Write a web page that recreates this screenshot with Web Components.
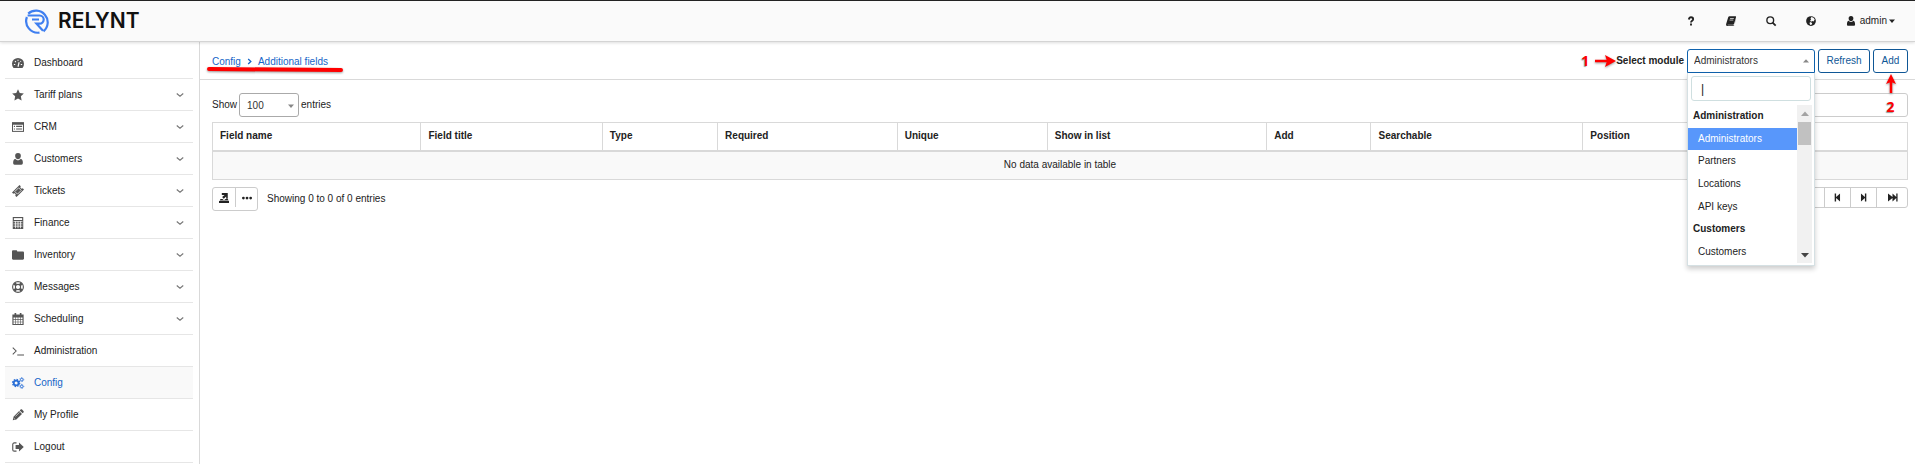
<!DOCTYPE html>
<html lang="en">
<head>
<meta charset="utf-8">
<title>Additional fields</title>
<style>
body { margin: 0; font: 10px/16px "Liberation Sans", Arial, sans-serif; color: #222; background: #fff; }
</style>
</head>
<body>
<app-shell>
  <top-bar slot="top"></top-bar>
  <side-nav slot="side"></side-nav>
  <page-header slot="main"></page-header>
  <fields-table slot="main"></fields-table>
</app-shell>
<script>
const ICONS = {
  dashboard: '<path d="M2 14.500a8 8 0 1 1 12 0z" fill="currentColor"/><path d="M8 13l1.500-6M2.500 10h1.800M11.700 10h1.800M4 5.500l1.200 1.200M8 3.500v1.500M12 5.500l-.8.8" stroke="#fff" stroke-width="1.500"/>',
  star: '<path fill="currentColor" d="M8 .3l2.300 5 5.500.7-4 3.800 1 5.500L8 12.600l-4.800 2.700 1-5.500-4-3.800 5.500-.7z"/>',
  crm: '<path fill="currentColor" d="M0 1.500h16v13H0z"/><path fill="#fff" d="M1.300 5h13.400v8.200H1.300z"/><path stroke="currentColor" stroke-width="1.500" d="M2.500 7.200H4M5.500 7.200h8M2.500 10.700H4M5.500 10.700h8"/>',
  user: '<path fill="currentColor" d="M8 0a3.800 3.800 0 0 1 3.800 4C11.800 6.500 10 8.300 8 8.300S4.200 6.500 4.200 4A3.800 3.800 0 0 1 8 0zM4.500 7.500C5.400 8.800 6.600 9.500 8 9.500s2.600-.7 3.500-2c2 .3 3 2.500 3 5.500 0 1.600-.8 2.500-2 2.500h-9c-1.200 0-2-.9-2-2.500 0-3 1-5.200 3-5.500z"/>',
  ticket: '<path fill="currentColor" d="M10 0l1.700 1.700a1.800 1.800 0 0 0 2.600 2.600L16 6 6 16l-1.700-1.700a1.800 1.800 0 0 0-2.600-2.600L0 10z"/><path fill="none" stroke="#fff" stroke-width="1" d="M8.800 3.700l3.500 3.500-5 5-3.500-3.500z"/>',
  calc: '<path fill="currentColor" d="M1 0h14v16H1z"/><path fill="#fff" d="M2.500 1.500h11v2.500h-11z"/><path stroke="#fff" stroke-width="1" d="M2 6.200h12M2 9.200h12M2 12.200h12M4.700 5.500v9.500M8 5.500v9.500M11.300 5.500v9.500"/>',
  folder: '<path fill="currentColor" d="M0 3.200C0 2.200.7 1.500 1.500 1.500h4C6.300 1.500 7 2.200 7 3.200h7.500c.8 0 1.500.7 1.500 1.500v8c0 .8-.7 1.500-1.500 1.500h-13C.7 14.200 0 13.500 0 12.700z"/>',
  life: '<circle cx="8" cy="8" r="7.200" fill="none" stroke="currentColor" stroke-width="1.500"/><circle cx="8" cy="8" r="3.500" fill="none" stroke="currentColor" stroke-width="1.400"/><path d="M3 3l2.700 2.700M13 3l-2.700 2.700M3 13l2.700-2.700M13 13l-2.700-2.700" stroke="currentColor" stroke-width="3.500"/>',
  calendar: '<path fill="currentColor" d="M.5 2h15v14H.5z"/><path fill="#fff" d="M2 6h2.500v2.300H2zM5.300 6h2.300v2.300H5.300zM8.400 6h2.300v2.300H8.400zM11.500 6H14v2.300h-2.500zM2 9.200h2.500v2.300H2zM5.300 9.200h2.300v2.300H5.300zM8.400 9.200h2.300v2.300H8.400zM11.500 9.200H14v2.300h-2.500zM2 12.400h2.500v2.200H2zM5.300 12.400h2.300v2.200H5.300zM8.400 12.400h2.300v2.200H8.400zM11.500 12.400H14v2.200h-2.500z"/><path stroke="currentColor" stroke-width="2.200" d="M4.500 0v4M11.500 0v4"/>',
  terminal: '<path fill="none" stroke="currentColor" stroke-width="1.400" d="M1 3.500l4.500 4.500L1 12.500M7 13.300h9"/>',
  cogs: '<circle cx="5.500" cy="8" r="3.200" fill="none" stroke="currentColor" stroke-width="2.400"/><circle cx="5.500" cy="8" r="4.800" fill="none" stroke="currentColor" stroke-width="1.600" stroke-dasharray="2 1.770"/><circle cx="13" cy="3.500" r="1.700" fill="none" stroke="currentColor" stroke-width="1.200"/><circle cx="13" cy="12.500" r="1.700" fill="none" stroke="currentColor" stroke-width="1.200"/><circle cx="13" cy="3.500" r="2.700" fill="none" stroke="currentColor" stroke-dasharray="1.100 1"/><circle cx="13" cy="12.500" r="2.700" fill="none" stroke="currentColor" stroke-dasharray="1.100 1"/>',
  pencil: '<path fill="currentColor" d="M1 15l1-4.800 7.500-7.500 3.800 3.800-7.500 7.500zM10.300 1.900l1.200-1.200c.6-.6 1.300-.6 1.900 0L15.300 2.600c.6.600.6 1.300 0 1.900l-1.200 1.200z"/><path stroke="#fff" stroke-width=".8" d="M4.500 10l5.500-5.500M2.200 12l1.800 1.800"/>',
  logout: '<path fill="none" stroke="currentColor" stroke-width="1.500" d="M6 2.500H3A2 2 0 0 0 1 4.500v7a2 2 0 0 0 2 2h3"/><path fill="currentColor" d="M4.800 5.300h4.500V2L15.700 8l-6.400 6v-3.300H4.800z"/>',
  chevron: '<path fill="none" stroke="currentColor" stroke-width="2.200" d="M1.500 5L8 10.500 14.500 5"/>',
  angle: '<path fill="none" stroke="currentColor" stroke-width="3" d="M5 2.500L11 8l-6 5.500"/>',
  help: '<path fill="none" stroke="currentColor" stroke-width="3" d="M4.500 5.500C5 3.300 6.300 2 8 2c2 0 3.400 1.300 3.400 3.100C11.400 7.800 8 7.500 8 10.500"/><path fill="currentColor" d="M6.500 12h3v3h-3z"/>',
  book: '<path fill="currentColor" d="M5.500.5H15c.9 0 1.300.7 1 1.600l-3 10.300c-.3.900-1 1.400-1.800 1.400H3c-.5 0-.6.900 0 .9h9.500c.5 0 .8-.4 1-.8L16 5v1.500l-2.700 8c-.3.900-1 1.500-1.800 1.500H2.500C.8 16-.3 14.300.2 12.700L3.500 2C3.800 1.100 4.700.5 5.500.5z"/><path stroke="#fff" stroke-width="1.100" d="M6.500 4h6M5.700 6.500h6"/>',
  search: '<circle cx="6.800" cy="6.800" r="5.400" fill="none" stroke="currentColor" stroke-width="2.200"/><path stroke="currentColor" stroke-width="2.800" d="M10.500 10.500l5 5"/>',
  globe: '<circle cx="8" cy="8" r="7.800" fill="currentColor"/><path fill="#fafafa" d="M8.500 1.500l3.500 1.200 2 3-2 3-2-.9-1.700 1.200-1.900-1.600 1.700-1.300-.9-1.800zM6.500 9.500l3.500 1.500-1.200 3-1.800.5-1.400-3z"/>',
  caret: '<path fill="currentColor" d="M0 4h16L8 13z"/>',
  export: '<path fill="currentColor" d="M4.500 0H14v9.200h-2.500V5.500L7.500 9 5 6.500 9 3H4.500zM2.500 9.500h3L8 11.500l2.500-2H14L15.500 12H1zM0 12.800h16V16H0z"/>',
  dots: '<circle cx="2.200" cy="8" r="2.200" fill="currentColor"/><circle cx="8" cy="8" r="2.200" fill="currentColor"/><circle cx="13.800" cy="8" r="2.200" fill="currentColor"/>',
  fastback: '<path fill="currentColor" d="M0 2h2v5.500L8 2v5.500L14 2v12L8 8.500V14L2 8.500V14H0z"/>',
  stepback: '<path fill="currentColor" d="M3 1h2.500v6L12.500 1v14L5.500 9v6H3z"/>',
  stepfwd: '<path fill="currentColor" d="M13 1h-2.500v6L3.500 1v14l7-6v6H13z"/>',
  fastfwd: '<path fill="currentColor" d="M17 1h-2.300v6L8 1v6L0 1v14l8-6v6l6.700-6v6H17z"/>'
};
const define = (name, html) => {
  const t = document.createElement('template');
  t.innerHTML = html;
  customElements.define(name, class extends HTMLElement {
    constructor() { super(); this.attachShadow({ mode: 'open' }).append(t.content.cloneNode(true)); }
  });
};

customElements.define('ui-icon', class extends HTMLElement {
  connectedCallback() {
    if (this.shadowRoot) return;
    this.attachShadow({ mode: 'open' }).innerHTML =
      `<style>:host{display:inline-block;width:12px;height:12px;flex:none}svg{display:block;width:100%;height:100%;overflow:visible}</style>
       <svg viewBox="0 0 16 16" aria-hidden="true">${ICONS[this.getAttribute('name')]}</svg>`;
  }
});

define('app-shell', `<style>
  :host { display: grid; grid-template: auto 1fr / 200px 1fr; min-height: 100vh; }
  header { grid-column: 1 / -1; position: relative; z-index: 1; }
  aside { border-right: 1px solid #d9d9d9; }
  main { min-width: 0; }
</style>
<header><slot name="top"></slot></header>
<aside><slot name="side"></slot></aside>
<main><slot name="main"></slot></main>`);

define('brand-logo', `<style>
  :host { display: block; }
  a { display: flex; align-items: center; gap: 7px; color: #111; text-decoration: none; font: 600 21px/24px Inter, sans-serif; }
  svg { width: 26px; height: 26px; }
</style>
<a href="#"><svg viewBox="0 0 26 26" aria-hidden="true" fill="none" stroke="#3f7ff0" stroke-width="2.200">
  <path d="M3.200 5.600A11.700 11.700 0 1 1 18.500 23.300M1.900 9A11.700 11.700 0 0 0 14.500 24.600"/>
  <path d="M2.600 7.500h12a4.100 4.100 0 0 1 0 8.200H11.500l6.500 7M7 11.500h7"/></svg><span>RELYNT</span></a>`);

define('top-bar', `<style>
  :host { display: flex; align-items: center; justify-content: space-between; height: 40px; padding: 0 20px 0 25px;
    background: #fafafa; border-top: 1px solid #222; border-bottom: 1px solid #d4d4d4; box-shadow: 0 1px 3px #0002; }
  nav { display: flex; align-items: center; gap: 30px; }
  button { display: flex; align-items: center; gap: 4px; border: 0; padding: 0; background: none; font: inherit; color: #222; }
  ui-icon { width: 10px; height: 10px; }
  .caret { width: 6px; height: 6px; margin-left: -2px; }
</style>
<brand-logo></brand-logo>
<nav>
  <button aria-label="Help"><ui-icon name="help"></ui-icon></button>
  <button aria-label="Documentation"><ui-icon name="book"></ui-icon></button>
  <button aria-label="Search"><ui-icon name="search"></ui-icon></button>
  <button aria-label="Language"><ui-icon name="globe"></ui-icon></button>
  <button><ui-icon name="user"></ui-icon>admin<ui-icon class="caret" name="caret"></ui-icon></button>
</nav>`);

customElements.define('nav-item', class extends HTMLElement {
  connectedCallback() {
    if (this.shadowRoot) return;
    this.attachShadow({ mode: 'open' }).innerHTML = `<style>
      :host { display: block; border-bottom: 1px solid #e6e6e6; color: #222; --icon: #555; }
      :host([active]) { background: #f9f9f9; color: #1565c8; --icon: #2a6fd6; }
      a { display: flex; align-items: center; height: 31px; padding: 0 9px 0 7px; color: inherit; text-decoration: none; }
      ui-icon { color: var(--icon); width: 12px; height: 12px; margin-right: 10px; }
      .more { margin: 0 0 0 auto; width: 8px; height: 8px; color: #777; }
    </style><a href="#"><ui-icon name="${this.getAttribute('icon')}"></ui-icon><slot></slot>${this.hasAttribute('more') ? '<ui-icon class="more" name="chevron"></ui-icon>' : ''}</a>`;
  }
});

define('side-nav', `<style>
  :host { display: block; padding: 5px 6px 0 5px; }
</style>
<nav>
  <nav-item icon="dashboard">Dashboard</nav-item>
  <nav-item icon="star" more>Tariff plans</nav-item>
  <nav-item icon="crm" more>CRM</nav-item>
  <nav-item icon="user" more>Customers</nav-item>
  <nav-item icon="ticket" more>Tickets</nav-item>
  <nav-item icon="calc" more>Finance</nav-item>
  <nav-item icon="folder" more>Inventory</nav-item>
  <nav-item icon="life" more>Messages</nav-item>
  <nav-item icon="calendar" more>Scheduling</nav-item>
  <nav-item icon="terminal">Administration</nav-item>
  <nav-item icon="cogs" active>Config</nav-item>
  <nav-item icon="pencil">My Profile</nav-item>
  <nav-item icon="logout">Logout</nav-item>
</nav>`);

define('module-menu', `<style>
  :host { display: block; box-sizing: border-box; background: #fff; border: 1px solid #d5e0e3; border-top: 0; box-shadow: 0 3px 5px #0003; padding: 3px 2px 2px 0; }
  input { display: block; box-sizing: border-box; width: calc(100% - 4px); height: 25px; margin: 0 1px 4px 3px; padding: 0 9px; border: 1px solid #cfdfe0; border-radius: 3px; font: 12px/16px "Liberation Sans", sans-serif; color: #222; outline: 0; }
  .scroll { display: grid; grid-template-columns: 1fr 15px; height: 158px; }
  .list { display: grid; grid-auto-rows: 1fr; }
  .list > * { display: flex; align-items: center; padding-left: 10px; }
  .list > strong { padding-left: 5px; }
  [aria-selected] { background: #5897fb; color: #fff; }
  .bar { display: flex; flex-direction: column; align-items: center; background: #f1f1f1; padding: 5px 0 4px; }
  .bar i { width: 13px; height: 23px; background: #c1c1c1; margin: 4px 0 auto; }
  .bar ui-icon { width: 8px; height: 8px; color: #444; }
  .bar .up { transform: rotate(180deg); color: #a3a3a3; }
</style>
<input type="text" value="|" aria-label="Search modules">
<div class="scroll">
  <div class="list" role="listbox">
    <strong>Administration</strong>
    <span role="option" aria-selected="true">Administrators</span>
    <span role="option">Partners</span>
    <span role="option">Locations</span>
    <span role="option">API keys</span>
    <strong>Customers</strong>
    <span role="option">Customers</span>
  </div>
  <div class="bar"><ui-icon class="up" name="caret"></ui-icon><i></i><ui-icon name="caret"></ui-icon></div>
</div>`);

define('page-header', `<style>
  :host { display: flex; justify-content: space-between; align-items: flex-start; height: 30px; padding: 7px 7px 0 12px; border-bottom: 1px solid #d9d9d9; }
  .crumbs { position: relative; display: flex; align-items: center; gap: 5px; height: 25px; color: #1565c8; }
  a { color: inherit; text-decoration: none; }
  .crumbs ui-icon { width: 7px; height: 7px; }
  .underline { position: absolute; left: -5px; top: 18px; width: 136px; height: 5px; }
  .tools { display: flex; align-items: center; gap: 3px; }
  .step { display: flex; align-items: center; }
  .num { font: 700 14px/16px "Open Sans", sans-serif; color: #f00; text-shadow: -1px 1px 1px #999; }
  svg { display: block; overflow: visible; filter: drop-shadow(0 1px 1px #0006); }
  .one { gap: 5px; margin-right: -3px; }
  .two { position: absolute; top: 25px; left: 0; right: 0; flex-direction: column; gap: 6px; z-index: 4; }
  .anchor { position: relative; }
  label { font-weight: 700; }
  select { display: block; box-sizing: border-box; width: 128px; height: 24px; padding: 0 6px; border: 1px solid #0f62ad; border-radius: 3px 3px 0 0; background: #fff; font: inherit; color: #333; appearance: none; }
  .anchor ui-icon { position: absolute; right: 6px; top: 9px; width: 6px; height: 6px; color: #888; transform: rotate(180deg); }
  module-menu { position: absolute; top: 24px; left: 0; right: 0; z-index: 3; }
  button { box-sizing: border-box; height: 24px; padding: 0; border: 1px solid #0f5796; border-radius: 3px; background: #fff; color: #0f5796; font: inherit; }
  .refresh { width: 52px; } .add { width: 35px; }
</style>
<nav class="crumbs" aria-label="Breadcrumb"><a href="#">Config</a><ui-icon name="angle"></ui-icon><a href="#">Additional fields</a>
  <svg class="underline" viewBox="0 0 136 5"><path d="M2 2L134 3" stroke="#f00" stroke-width="4" stroke-linecap="round"/></svg></nav>
<div class="tools">
  <div class="step one"><span class="num">1</span><svg width="22" height="12" viewBox="0 0 22 12"><path d="M1 6h13" stroke="#f00" stroke-width="2.500"/><path fill="#f00" d="M11 0l11 6-11 6 2-6z"/></svg></div>
  <label for="module">Select module</label>
  <div class="anchor"><select id="module"><option>Administrators</option></select><ui-icon name="caret"></ui-icon><module-menu></module-menu></div>
  <button class="refresh">Refresh</button>
  <div class="anchor"><button class="add">Add</button>
    <div class="step two"><svg width="10" height="19" viewBox="0 0 10 19"><path d="M5 19V6" stroke="#f00" stroke-width="2.500"/><path fill="#f00" d="M5 0l5 10-5-2-5 2z"/></svg><span class="num">2</span></div></div>
</div>`);

define('fields-table', `<style>
  :host { display: block; padding: 13px 7px 0 12px; color: #222; }
  .row { display: flex; justify-content: space-between; align-items: flex-start; }
  .length { display: flex; gap: 2px; line-height: 23px; }
  .pick { position: relative; }
  select, input { display: block; box-sizing: border-box; height: 24px; padding: 0 7px; border: 1px solid #aaa; border-radius: 3px; background: #fff; font: inherit; color: #333; appearance: none; }
  select { width: 60px; }
  input { width: 130px; border-color: #ccc; }
  .pick ui-icon { position: absolute; right: 5px; top: 10px; width: 6px; height: 6px; color: #888; }
  table { width: 100%; table-layout: fixed; border-collapse: collapse; margin: 5px 0 7px; }
  th, td { box-sizing: border-box; border: 1px solid #d9d9d9; padding: 0 7px; height: 29px; }
  th { text-align: left; height: 28px; padding-bottom: 1px; }
  thead tr { border-bottom: 2px solid #d9d9d9; }
  td { background: #f9f9f9; text-align: center; }
  .group { display: flex; border: 1px solid #ccc; border-radius: 3px; }
  .group button { display: grid; place-items: center; box-sizing: border-box; height: 19px; width: 22px; padding: 0; border: 0; background: none; color: #222; }
  .group button + button { border-left: 1px solid #ccc; }
  .group ui-icon { width: 10px; height: 10px; }
  .pager button { width: 26px; }
  .pager button:last-child { width: 31px; }
  .pager ui-icon { width: 9px; height: 9px; }
  .left { display: flex; gap: 9px; line-height: 24px; }
</style>
<div class="row">
  <div class="length"><label for="len">Show</label><span class="pick"><select id="len"><option>100</option></select><ui-icon name="caret"></ui-icon></span><span>entries</span></div>
  <input type="search" aria-label="Search">
</div>
<table>
  <colgroup><col style="width:12.300%"><col style="width:10.700%"><col style="width:6.800%"><col style="width:10.600%"><col style="width:8.850%"><col style="width:12.950%"><col style="width:6.150%"><col style="width:12.500%"><col></colgroup>
  <thead><tr><th>Field name</th><th>Field title</th><th>Type</th><th>Required</th><th>Unique</th><th>Show in list</th><th>Add</th><th>Searchable</th><th>Position</th></tr></thead>
  <tbody><tr><td colspan="9">No data available in table</td></tr></tbody>
</table>
<div class="row">
  <div class="left"><div class="group"><button aria-label="Export"><ui-icon name="export"></ui-icon></button><button aria-label="More"><ui-icon name="dots"></ui-icon></button></div><span>Showing 0 to 0 of 0 entries</span></div>
  <div class="group pager"><button aria-label="Previous"><ui-icon name="fastback"></ui-icon></button><button aria-label="Previous field"><ui-icon name="stepback"></ui-icon></button><button aria-label="Next"><ui-icon name="stepfwd"></ui-icon></button><button aria-label="Last"><ui-icon name="fastfwd"></ui-icon></button></div>
</div>`);
</script>
</body>
</html>
